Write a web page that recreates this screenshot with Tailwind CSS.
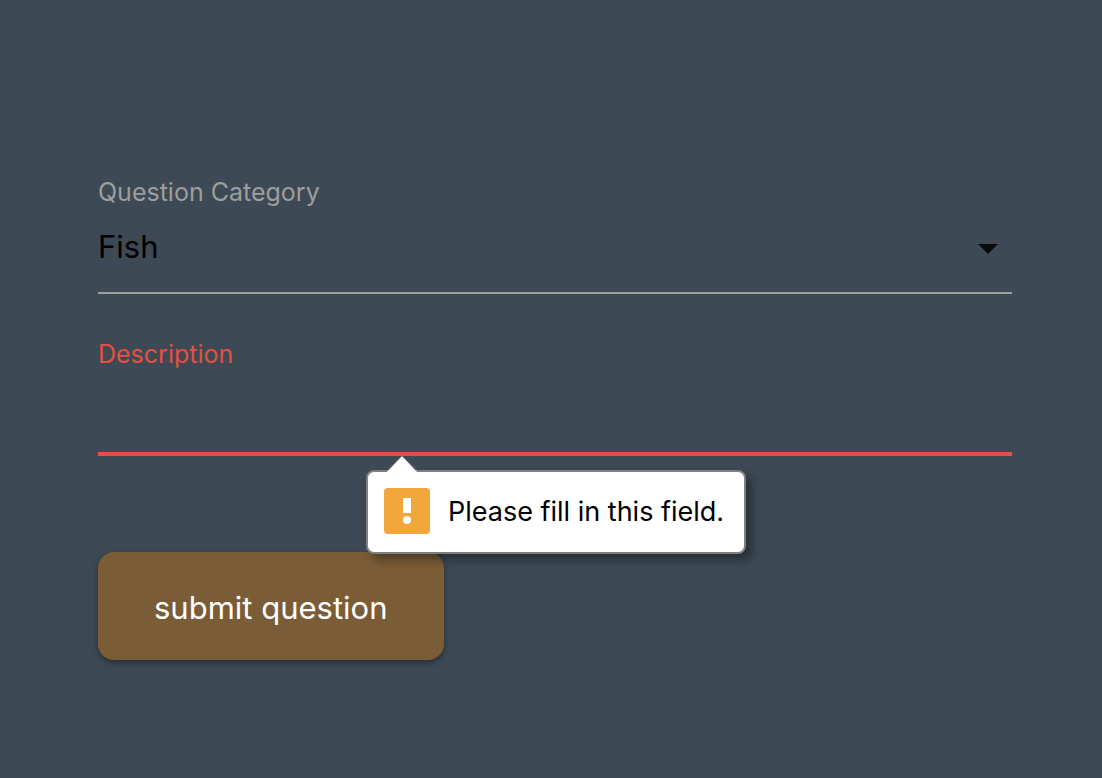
<!DOCTYPE html>
<html lang="en">
<head>
<meta charset="utf-8">
<meta name="viewport" content="width=device-width, initial-scale=1">
<title>Submit a question</title>
<script src="https://cdn.jsdelivr.net/npm/@tailwindcss/browser@4"></script>
</head>
<body class="min-h-screen bg-[#3d4954] font-['Inter',sans-serif]">
<main class="pt-44 pr-[90px] pb-16 pl-[98px]">
  <form novalidate class="flex flex-col items-start">
    <div class="flex w-full flex-col">
      <label for="category" class="text-[25px] leading-8 text-[#9e9e9e]">Question Category</label>
      <div class="relative border-b-2 border-[#9e9e9e]">
        <select id="category" class="block h-[84px] w-full appearance-none bg-transparent pb-[6px] text-[31px] text-black outline-none">
          <option>Fish</option>
        </select>
        <svg class="pointer-events-none absolute top-9 right-[14px] h-[10px] w-5" viewBox="0 0 20 10" aria-hidden="true"><path d="M0 0h20L10 10z" fill="#080a0c"/></svg>
      </div>
    </div>
    <div class="relative mt-11 flex w-full flex-col">
      <label for="description" class="text-[25px] leading-8 text-[#e25141]">Description</label>
      <input id="description" type="text" required class="h-[86px] w-full border-b-4 border-[#e25141] bg-transparent text-[31px] text-black outline-none">
      <div role="alert" class="absolute top-[132px] left-[268px] z-10 flex h-[84px] items-start gap-[18px] rounded-lg border-2 border-[#7f8081] bg-white pt-4 pr-5 pl-4 shadow-[6px_6px_10px_rgba(0,0,0,0.35)]">
        <svg class="absolute -top-4 left-4 h-[18px] w-9" viewBox="0 0 36 18" aria-hidden="true"><path d="M1 18L18 0l17 18z" fill="#fff"/><path d="M1 16L18 0l17 16" fill="none" stroke="#7f8081" stroke-width="1" stroke-opacity=".6"/></svg>
        <svg class="size-[46px] shrink-0" viewBox="0 0 46 46" aria-hidden="true"><rect width="46" height="46" rx="4" fill="#f1a73b"/><path d="M19 10h8v15h-8z" fill="#fff"/><circle cx="23" cy="32" r="4" fill="#fff"/></svg>
        <span class="text-[27px] leading-[48px] whitespace-nowrap text-black">Please fill in this field.</span>
      </div>
    </div>
    <button type="submit" class="mt-24 h-[108px] rounded-2xl bg-[#7a5c36] px-14 pt-1 pb-0 text-[31px] whitespace-nowrap text-white shadow-[0_3px_6px_rgba(0,0,0,0.35)]">submit question</button>
  </form>
</main>
</body>
</html>
